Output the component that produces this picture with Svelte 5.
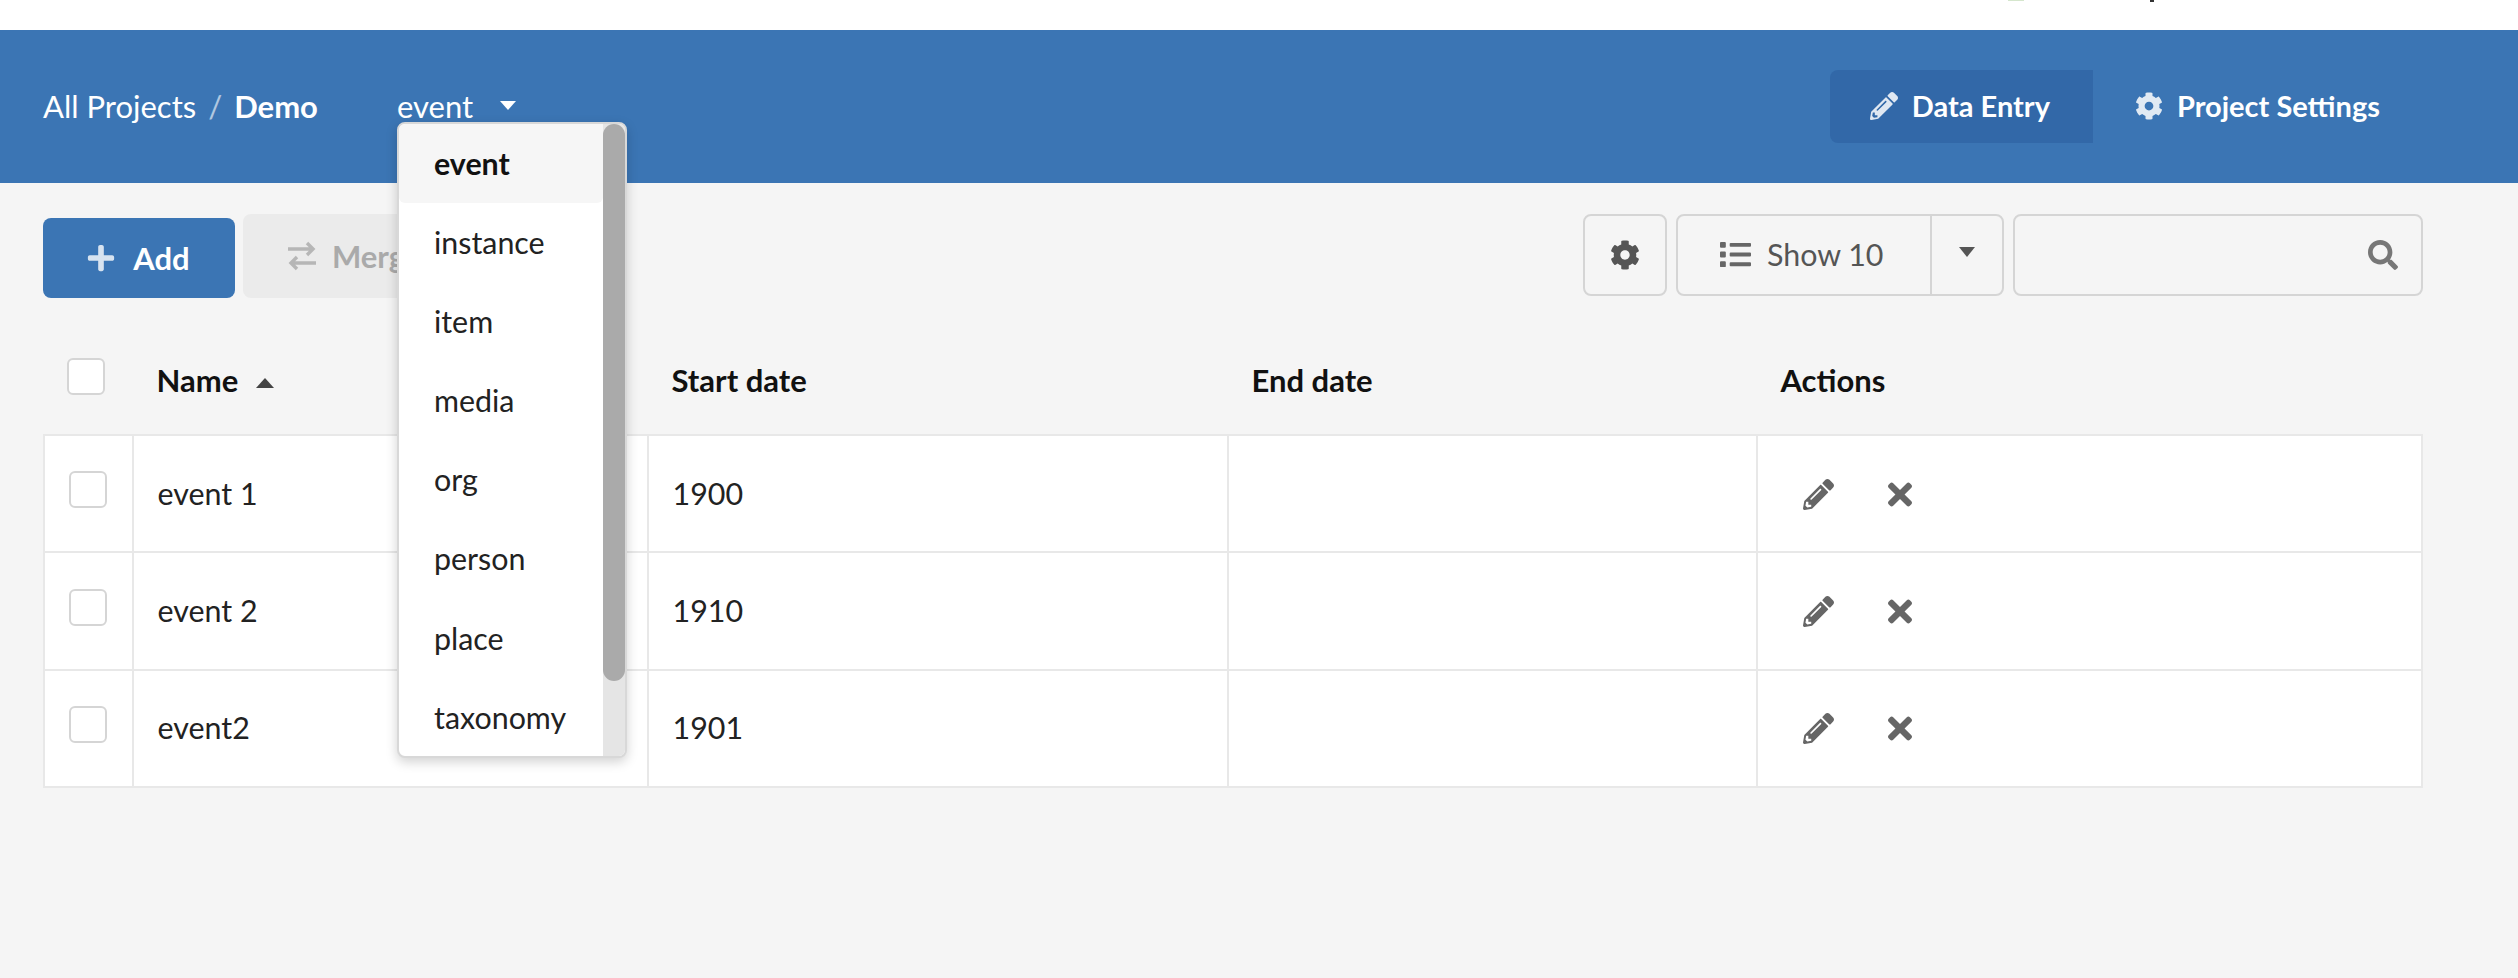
<script>
  const icons = {
    pencil: "M497.9 142.1l-46.1 46.1c-4.7 4.7-12.3 4.7-17 0l-111-111c-4.7-4.7-4.7-12.3 0-17l46.1-46.1c18.7-18.7 49.1-18.7 67.9 0l60.1 60.1c18.8 18.7 18.8 49.1 0 67.9zM284.2 99.8L21.6 362.4.4 483.9c-2.9 16.4 11.4 30.6 27.8 27.8l121.5-21.3 262.6-262.6c4.7-4.7 4.7-12.3 0-17l-111-111c-4.8-4.7-12.4-4.7-17.1 0zM124.1 339.9c-5.5-5.5-5.5-14.3 0-19.8l154-154c5.5-5.5 14.3-5.5 19.8 0s5.5 14.3 0 19.8l-154 154c-5.5 5.5-14.3 5.5-19.8 0zM88 424h48v36.3l-64.5 11.3-31.1-31.1L51.7 376H88v48z",
    cog: "M487.4 315.7l-42.6-24.6c4.3-23.2 4.3-47 0-70.2l42.6-24.6c4.9-2.8 7.1-8.6 5.5-14-11.1-35.6-30-67.8-54.7-94.6-3.8-4.1-10-5.1-14.8-2.3L380.8 110c-17.9-15.4-38.5-27.3-60.8-35.1V25.8c0-5.6-3.9-10.5-9.4-11.7-36.7-8.2-74.3-7.8-109.2 0-5.5 1.2-9.4 6.1-9.4 11.7V75c-22.2 7.9-42.8 19.8-60.8 35.1L88.7 85.5c-4.9-2.8-11-1.9-14.8 2.3-24.7 26.7-43.6 58.9-54.7 94.6-1.7 5.4.6 11.2 5.5 14L67.3 221c-4.3 23.2-4.3 47 0 70.2l-42.6 24.6c-4.9 2.8-7.1 8.6-5.5 14 11.1 35.6 30 67.8 54.7 94.6 3.8 4.1 10 5.1 14.8 2.3l42.6-24.6c17.9 15.4 38.5 27.3 60.8 35.1v49.2c0 5.6 3.9 10.5 9.4 11.7 36.7 8.2 74.3 7.8 109.2 0 5.5-1.2 9.4-6.1 9.4-11.7v-49.2c22.2-7.9 42.8-19.8 60.8-35.1l42.6 24.6c4.9 2.8 11 1.9 14.8-2.3 24.7-26.7 43.6-58.9 54.7-94.6 1.5-5.5-.7-11.3-5.6-14.1zM256 336c-44.1 0-80-35.9-80-80s35.9-80 80-80 80 35.9 80 80-35.9 80-80 80z",
    plus: "M416 208H272V64c0-17.67-14.33-32-32-32h-32c-17.67 0-32 14.33-32 32v144H32c-17.67 0-32 14.33-32 32v32c0 17.67 14.33 32 32 32h144v144c0 17.67 14.33 32 32 32h32c17.67 0 32-14.33 32-32V304h144c17.67 0 32-14.33 32-32v-32c0-17.67-14.33-32-32-32z",
    times: "M242.72 256l100.07-100.07c12.28-12.28 12.28-32.19 0-44.48l-22.24-22.24c-12.28-12.28-32.19-12.28-44.48 0L176 189.28 75.93 89.21c-12.28-12.28-32.19-12.28-44.48 0L9.21 111.45c-12.28 12.28-12.28 32.19 0 44.48L109.28 256 9.21 356.07c-12.28 12.28-12.28 32.19 0 44.48l22.24 22.24c12.28 12.28 32.2 12.28 44.48 0L176 322.72l100.07 100.07c12.28 12.28 32.2 12.28 44.48 0l22.24-22.24c12.28-12.28 12.28-32.19 0-44.48L242.72 256z",
    list: "M80 368H16a16 16 0 0 0-16 16v64a16 16 0 0 0 16 16h64a16 16 0 0 0 16-16v-64a16 16 0 0 0-16-16zm0-320H16A16 16 0 0 0 0 64v64a16 16 0 0 0 16 16h64a16 16 0 0 0 16-16V64a16 16 0 0 0-16-16zm0 160H16a16 16 0 0 0-16 16v64a16 16 0 0 0 16 16h64a16 16 0 0 0 16-16v-64a16 16 0 0 0-16-16zm416 176H176a16 16 0 0 0-16 16v32a16 16 0 0 0 16 16h320a16 16 0 0 0 16-16v-32a16 16 0 0 0-16-16zm0-320H176a16 16 0 0 0-16 16v32a16 16 0 0 0 16 16h320a16 16 0 0 0 16-16V80a16 16 0 0 0-16-16zm0 160H176a16 16 0 0 0-16 16v32a16 16 0 0 0 16 16h320a16 16 0 0 0 16-16v-32a16 16 0 0 0-16-16z",
    search: "M505 442.7L405.3 343c-4.5-4.5-10.6-7-17-7H372c27.6-35.3 44-79.7 44-128C416 93.1 322.9 0 208 0S0 93.1 0 208s93.1 208 208 208c48.3 0 92.7-16.4 128-44v16.3c0 6.4 2.5 12.5 7 17l99.7 99.7c9.4 9.4 24.6 9.4 33.9 0l28.3-28.3c9.4-9.4 9.4-24.6.1-34zM208 336c-70.7 0-128-57.2-128-128 0-70.7 57.2-128 128-128 70.7 0 128 57.2 128 128 0 70.7-57.2 128-128 128z",
  };

  const types = ["event", "instance", "item", "media", "org", "person", "place", "taxonomy"];
  const rows = [
    { name: "event 1", start: "1900", end: "" },
    { name: "event 2", start: "1910", end: "" },
    { name: "event2", start: "1901", end: "" },
  ];
</script>

<div class="top">
  <span class="sliver green"></span>
  <span class="sliver dark"></span>
</div>

<nav class="nav">
  <div class="crumbs">
    <span>All Projects</span>
    <span class="slash">/</span>
    <b>Demo</b>
  </div>
  <div class="type-select">
    <span>event</span>
    <i class="caret white"></i>
    <div class="menu">
      <ul>
        {#each types as t, i}
          <li class:active={i === 0}>{t}</li>
        {/each}
      </ul>
      <div class="track"><div class="thumb"></div></div>
    </div>
  </div>
  <div class="tabs">
    <span class="tab active">
      <svg viewBox="0 0 512 512"><path d={icons.pencil} /></svg>
      Data Entry
    </span>
    <span class="tab">
      <svg viewBox="0 0 512 512"><path d={icons.cog} /></svg>
      Project Settings
    </span>
  </div>
</nav>

<main class="content">
  <div class="toolbar">
    <button class="add">
      <svg viewBox="0 0 448 512"><path d={icons.plus} /></svg>
      Add
    </button>
    <button class="merge">
      <svg viewBox="0 0 28 30" fill="none" stroke="currentColor" stroke-width="3.4">
        <path d="M0 8h25M19 2l6 6-6 6" />
        <path d="M28 22H3M9 16l-6 6 6 6" />
      </svg>
      Merge
    </button>
    <div class="right">
      <button class="outline gear">
        <svg viewBox="0 0 512 512"><path d={icons.cog} /></svg>
      </button>
      <div class="outline show">
        <span class="show-main">
          <svg viewBox="0 0 512 512"><path d={icons.list} /></svg>
          Show 10
        </span>
        <span class="show-drop"><i class="caret grey"></i></span>
      </div>
      <div class="outline search">
        <svg viewBox="0 0 512 512"><path d={icons.search} /></svg>
      </div>
    </div>
  </div>

  <table>
    <colgroup>
      <col style="width: 89px" />
      <col style="width: 515px" />
      <col style="width: 580px" />
      <col style="width: 529px" />
      <col />
    </colgroup>
    <thead>
      <tr>
        <th class="check"><span class="box"></span></th>
        <th>Name <i class="caret up"></i></th>
        <th>Start date</th>
        <th>End date</th>
        <th>Actions</th>
      </tr>
    </thead>
    <tbody>
      {#each rows as row}
        <tr>
          <td class="check"><span class="box"></span></td>
          <td>{row.name}</td>
          <td>{row.start}</td>
          <td>{row.end}</td>
          <td class="actions">
            <svg class="edit" viewBox="0 0 512 512"><path d={icons.pencil} /></svg>
            <svg class="del" viewBox="0 0 352 512"><path d={icons.times} /></svg>
          </td>
        </tr>
      {/each}
    </tbody>
  </table>
</main>

<style>
  :global(body) {
    margin: 0;
    background: #f5f5f5;
    font-family: Lato, "Open Sans", sans-serif;
    font-size: 30.4px;
    color: #222;
  }

  svg {
    fill: currentColor;
    display: block;
    flex: none;
  }

  .top {
    height: 30px;
    background: #fff;
    display: flex;
    align-items: flex-start;
    padding-left: 2008px;
  }

  .sliver {
    display: block;
    height: 1px;
  }

  .sliver.green {
    width: 16px;
    background: #d5e6cd;
  }

  .sliver.dark {
    width: 4px;
    height: 2px;
    margin-left: 126px;
    background: #333;
  }

  .nav {
    height: 153px;
    padding: 0 0 0 43px;
    background: #3b75b4;
    color: #fff;
    display: flex;
    align-items: center;
  }

  .crumbs {
    width: 354px;
    display: flex;
    align-items: center;
    font-size: 31px;
    padding-bottom: 2px;
    box-sizing: border-box;
  }

  .crumbs b {
    font-weight: 700;
  }

  .slash {
    margin: 0 12px;
    opacity: 0.6;
  }

  .type-select {
    position: relative;
    display: flex;
    align-items: center;
    font-size: 31px;
    padding-bottom: 2px;
  }

  .caret {
    display: block;
    width: 0;
    height: 0;
    border-left: 8px solid transparent;
    border-right: 8px solid transparent;
  }

  .caret.white {
    margin-left: 27px;
    border-top: 9px solid #fff;
  }

  .caret.grey {
    margin-bottom: 6px;
    border-top: 10px solid #555;
  }

  .caret.up {
    display: inline-block;
    margin-left: 10px;
    border-left-width: 9px;
    border-right-width: 9px;
    border-bottom: 10px solid #444;
    vertical-align: 4px;
  }

  .menu {
    position: absolute;
    left: 0;
    top: 35px;
    width: 226px;
    height: 632px;
    display: flex;
    background: #fff;
    border: 2px solid #d8d8d8;
    border-radius: 8px;
    box-shadow: 0 4px 12px rgba(0, 0, 0, 0.18);
    overflow: hidden;
    color: #222;
    font-size: 30.4px;
    z-index: 2;
  }

  .menu ul {
    flex: 1;
    margin: 0;
    padding: 0;
    list-style: none;
  }

  .menu li {
    height: 79.2px;
    line-height: 79.2px;
    padding-left: 35px;
  }

  .menu li.active {
    background: #f6f6f6;
    font-weight: 700;
    color: #111;
    border-radius: 0 0 6px 6px;
  }

  .track {
    width: 22px;
    background: #e5e5e5;
  }

  .thumb {
    height: 557px;
    background: #aaa;
    border-radius: 11px;
  }

  .tabs {
    margin-left: auto;
    display: flex;
    padding-right: 96px;
  }

  .tab {
    height: 73px;
    box-sizing: border-box;
    display: flex;
    align-items: center;
    gap: 14px;
    padding: 0 42px 2px;
    font-weight: 700;
    font-size: 29px;
  }

  .tab svg {
    width: 28px;
    height: 28px;
    opacity: 0.85;
  }

  .tab.active {
    background: #3268a8;
    border-radius: 8px 0 0 8px;
    padding: 0 43px 2px 40px;
  }

  .content {
    padding: 31px 95px 0 43px;
  }

  .toolbar {
    display: flex;
    align-items: flex-end;
    height: 84px;
  }

  button {
    font: inherit;
    border: 0;
    display: flex;
    align-items: center;
    justify-content: center;
    padding: 0;
  }

  .add {
    width: 192px;
    height: 80px;
    gap: 18px;
    padding-right: 1px;
    background: #3b75b4;
    color: #fff;
    font-weight: 700;
    border-radius: 8px;
    font-size: 31px;
  }

  .add svg {
    width: 28px;
    height: 30px;
    opacity: 0.8;
  }

  .merge {
    width: 240px;
    height: 84px;
    margin-left: 8px;
    gap: 16px;
    justify-content: flex-start;
    padding-left: 45px;
    background: #ebebeb;
    color: #aaa;
    font-weight: 700;
    border-radius: 8px;
    font-size: 31px;
  }

  .merge svg {
    width: 28px;
    height: 30px;
    fill: none;
    opacity: 0.8;
  }

  .right {
    margin-left: auto;
    align-self: flex-start;
    display: flex;
    gap: 9px;
  }

  .outline {
    height: 82px;
    box-sizing: border-box;
    border: 2px solid #d5d5d5;
    border-radius: 8px;
    background: #f5f5f5;
    color: #555;
  }

  .gear {
    width: 84px;
  }

  .gear svg {
    width: 30px;
    height: 30px;
  }

  .show {
    width: 328px;
    display: flex;
    align-items: stretch;
  }

  .show-main {
    width: 254px;
    display: flex;
    align-items: center;
    gap: 16px;
    padding: 0 0 2px 42px;
    box-sizing: border-box;
    border-right: 2px solid #d5d5d5;
  }

  .show-main svg {
    width: 31px;
    height: 31px;
    color: #666;
  }

  .show-drop {
    flex: 1;
    display: flex;
    align-items: center;
    justify-content: center;
  }

  .search {
    width: 410px;
    display: flex;
    align-items: center;
    justify-content: flex-end;
    padding-right: 23px;
    box-sizing: border-box;
  }

  .search svg {
    width: 30px;
    height: 30px;
    color: #777;
  }

  table {
    width: 2380px;
    margin-top: 53px;
    border-collapse: collapse;
    table-layout: fixed;
  }

  th {
    height: 84px;
    padding: 0 0 26px 23.5px;
    box-sizing: border-box;
    text-align: left;
    font-weight: 700;
    color: #111;
    font-size: 31px;
  }

  td {
    height: 117.4px;
    box-sizing: border-box;
    padding: 0 0 2px 23.5px;
    background: #fff;
    border: 2px solid #e8e8e8;
  }

  .box {
    display: block;
    width: 38px;
    height: 37px;
    box-sizing: border-box;
    border: 2px solid #d5d5d5;
    border-radius: 6px;
    background: #fff;
  }

  th.check {
    padding: 0 0 32px 23px;
  }

  td.check {
    padding-left: 24px;
  }

  td.check .box {
    margin-top: -6px;
  }

  .actions svg {
    display: inline-block;
    color: #666;
    vertical-align: middle;
    margin-top: -4px;
  }

  .edit {
    width: 31px;
    height: 31px;
    margin-left: 21px;
  }

  .del {
    width: 24px;
    height: 35px;
    margin-left: 47px;
  }
</style>
